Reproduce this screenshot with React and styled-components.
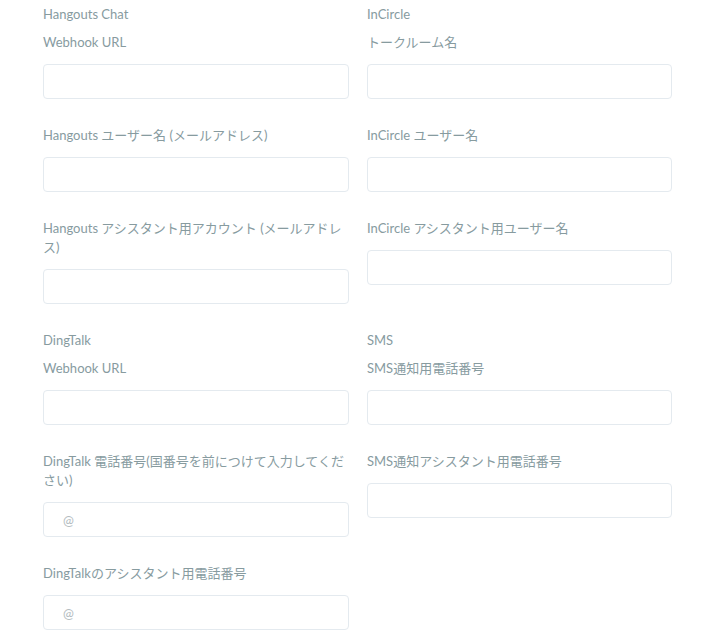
import styled, { createGlobalStyle } from 'styled-components'

const GlobalStyle = createGlobalStyle`
    body {
        margin: 0;
        background: #ffffff;
        font-family: Lato, "Noto Sans CJK JP", sans-serif;
    }
`

const Page = styled.div`
    padding: 5px 33px 0 43px;
`

const Section = styled.section`
    display: grid;
    grid-template-columns: 306px 305px;
    column-gap: 18px;
`

const Column = styled.div`
    display: flex;
    flex-direction: column;
`

const SectionTitle = styled.h3`
    margin: 0 0 9px;
    font-size: 13px;
    font-weight: 400;
    line-height: 19px;
    color: #879b9f;
`

const Field = styled.div`
    display: flex;
    flex-direction: column;
    margin-bottom: 27px;
`

const Label = styled.label`
    font-size: 13px;
    font-weight: 400;
    line-height: 19px;
    color: #879b9f;
    margin-bottom: 12px;
`

const Input = styled.input`
    box-sizing: border-box;
    height: 35px;
    width: 100%;
    border: 1px solid #e4eaef;
    border-radius: 4px;
    padding: 0 19px;
    font-family: Lato, "Noto Sans CJK JP", sans-serif;
    font-size: 13px;
    color: #56666b;
    outline: none;

    &::placeholder {
        color: #b3bcc0;
    }
`

const sections = [
    [
        {
            title: 'Hangouts Chat',
            fields: [
                { label: 'Webhook URL' },
                { label: 'Hangouts ユーザー名 (メールアドレス)' },
                { label: 'Hangouts アシスタント用アカウント (メールアドレス)' },
            ],
        },
        {
            title: 'InCircle',
            fields: [
                { label: 'トークルーム名' },
                { label: 'InCircle ユーザー名' },
                { label: 'InCircle アシスタント用ユーザー名' },
            ],
        },
    ],
    [
        {
            title: 'DingTalk',
            fields: [
                { label: 'Webhook URL' },
                { label: 'DingTalk 電話番号(国番号を前につけて入力してください)', placeholder: '@' },
                { label: 'DingTalkのアシスタント用電話番号', placeholder: '@' },
            ],
        },
        {
            title: 'SMS',
            fields: [
                { label: 'SMS通知用電話番号' },
                { label: 'SMS通知アシスタント用電話番号' },
            ],
        },
    ],
]

const App = () => {
    return (
        <>
            <GlobalStyle />
            <Page>
                {sections.map((cols, i) => (
                    <Section key={i}>
                        {cols.map((col) => (
                            <Column key={col.title}>
                                <SectionTitle>{col.title}</SectionTitle>
                                {col.fields.map((f, j) => (
                                    <Field key={j}>
                                        <Label>{f.label}</Label>
                                        <Input type="text" placeholder={f.placeholder || ''} />
                                    </Field>
                                ))}
                            </Column>
                        ))}
                    </Section>
                ))}
            </Page>
        </>
    )
}

export default App
